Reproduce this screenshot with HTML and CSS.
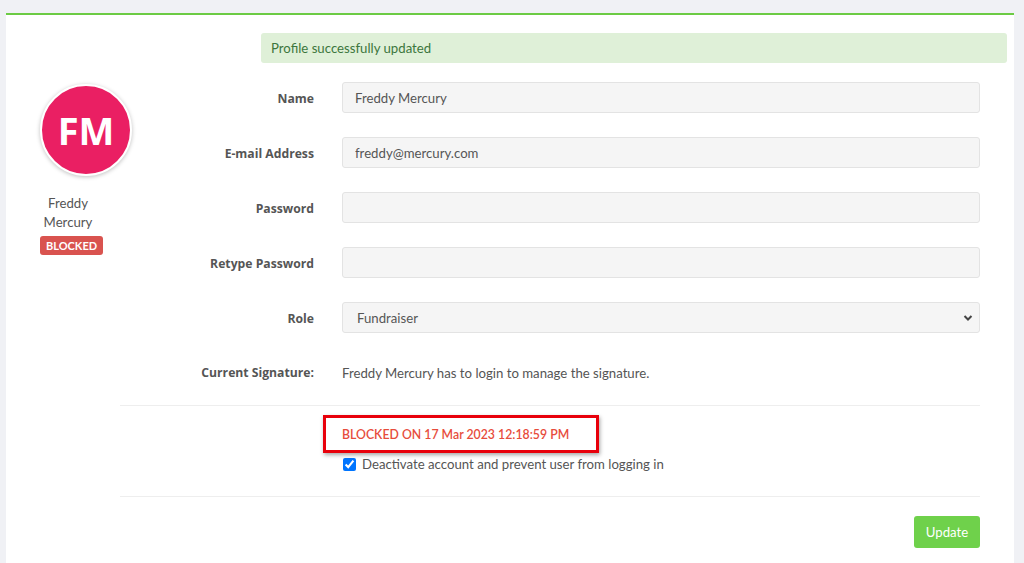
FILE: index.html
```html
<!DOCTYPE html>
<html lang="en">
<head>
  <meta charset="UTF-8"/>
  <meta name="viewport" content="width=device-width, initial-scale=1.0"/>
  <title>Edit User</title>
  <link rel="stylesheet" href="styles.css">
</head>
<body>

<div class="card">
  <div class="alert">Profile successfully updated</div>

  <div class="profile">
    <div class="sidebar">
      <div class="avatar">FM</div>
      <div class="user-name">Freddy Mercury</div>
      <span class="badge">BLOCKED</span>
    </div>

    <form class="form">
      <div class="row">
        <label>Name</label>
        <input type="text" value="Freddy Mercury"/>
      </div>
      <div class="row">
        <label>E-mail Address</label>
        <input type="text" value="freddy@mercury.com"/>
      </div>
      <div class="row">
        <label>Password</label>
        <input type="password"/>
      </div>
      <div class="row">
        <label>Retype Password</label>
        <input type="password"/>
      </div>
      <div class="row">
        <label>Role</label>
        <div class="select-wrap">
          <select>
            <option>Fundraiser</option>
            <option>Admin</option>
          </select>
          <svg class="chevron" width="10" height="8" viewBox="0 0 10 8"><path d="M1.5 2 L5 5.5 L8.5 2" fill="none" stroke="#444" stroke-width="2"/></svg>
        </div>
      </div>
      <div class="row text-row">
        <label>Current Signature:</label>
        <p class="static">Freddy Mercury has to login to manage the signature.</p>
      </div>

      <div class="blocked">
        <div class="blocked-info">
          <div class="blocked-date">BLOCKED ON 17 Mar 2023 12:18:59 PM</div>
          <div class="highlight"></div>
        </div>
        <label class="check">
          <input type="checkbox" checked/>
          Deactivate account and prevent user from logging in
        </label>
      </div>

      <div class="actions">
        <button type="button">Update</button>
      </div>
    </form>
  </div>
</div>

</body>
</html>
```

FILE: styles.css
```css
body {
  font-family: "Lato", "Open Sans", sans-serif;
  font-size: 13.2px;
  background: #f0f1f5;
  margin: 0;
  padding: 13px 10px 0 6px;
  color: #555;
  overflow: hidden;
}
.card {
  background: #fff;
  border-top: 2px solid #6ccb44;
  height: 540px;
  padding-top: 18px;
}
.alert {
  margin: 0 7px 0 255px;
  background: #dff0d8;
  color: #3c763d;
  border-radius: 3px;
  padding: 0 10px;
  height: 30px;
  line-height: 30px;
}
.profile {
  display: flex;
  margin-top: 19px;
}
.sidebar {
  width: 114px;
  padding-top: 2px;
}
.avatar {
  width: 92px;
  height: 92px;
  margin-left: 34px;
  border-radius: 50%;
  background: #ea1f63;
  color: #fff;
  font-family: "Open Sans", sans-serif;
  font-weight: 700;
  font-size: 38px;
  display: flex;
  align-items: center;
  justify-content: center;
  box-shadow: 0 1px 4px rgba(0, 0, 0, 0.25);
  border: 2px solid #fff;
  box-sizing: border-box;
}
.user-name {
  width: 64px;
  margin: 18px 0 0 30px;
  text-align: center;
  line-height: 19px;
}
.badge {
  display: inline-block;
  margin: 4px 0 0 34px;
  background: #d9534f;
  color: #fff;
  font-weight: 700;
  font-size: 11px;
  padding: 0 6px;
  height: 19px;
  line-height: 19px;
  border-radius: 3px;
}
.form {
  width: 860px;
  margin: 0;
}
.row {
  display: flex;
  align-items: center;
  margin-bottom: 24px;
}
.row label {
  width: 194px;
  text-align: right;
  font-family: "Open Sans", sans-serif;
  font-size: 12.2px;
  font-weight: 700;
  margin-right: 28px;
  padding-top: 1px;
  flex-shrink: 0;
}
.row input, .select-wrap select {
  width: 638px;
  height: 31px;
  box-sizing: border-box;
  background: #f5f5f5;
  border: 1px solid #e3e3e3;
  border-radius: 3px;
  padding: 0 12px;
  font: inherit;
  color: #555;
}
.select-wrap {
  position: relative;
}
.select-wrap select {
  appearance: none;
  padding-left: 14px;
}
.chevron {
  position: absolute;
  right: 7px;
  top: 12px;
}
.text-row {
  height: 30px;
  margin-bottom: 18px;
}
.static {
  margin: 0;
  padding-top: 2px;
}
.blocked {
  border-top: 1px solid #eee;
  border-bottom: 1px solid #eee;
  padding: 20px 0 23px 222px;
}
.blocked-info {
  position: relative;
}
.blocked-date {
  color: #e74c3c;
  font-size: 12.3px;
  font-weight: 600;
  line-height: 18px;
}
.highlight {
  position: absolute;
  left: -19px;
  top: -11px;
  width: 270px;
  height: 32px;
  border: 3px solid #e8000b;
  box-shadow: 1px 2px 4px rgba(0, 0, 0, 0.35);
}
.check {
  display: flex;
  align-items: center;
  gap: 6px;
  margin-top: 11px;
  line-height: 18px;
}
.check input {
  margin: 0 0 0 1px;
  width: 13px;
  height: 13px;
}
.actions {
  display: flex;
  justify-content: flex-end;
  padding-top: 19px;
}
button {
  background: #6fd14b;
  color: #fff;
  border: none;
  border-radius: 3px;
  font: inherit;
  width: 66px;
  height: 32px;
  padding-top: 1px;
  cursor: pointer;
}
button:hover {
  background: #5fbf3d;
}
```
